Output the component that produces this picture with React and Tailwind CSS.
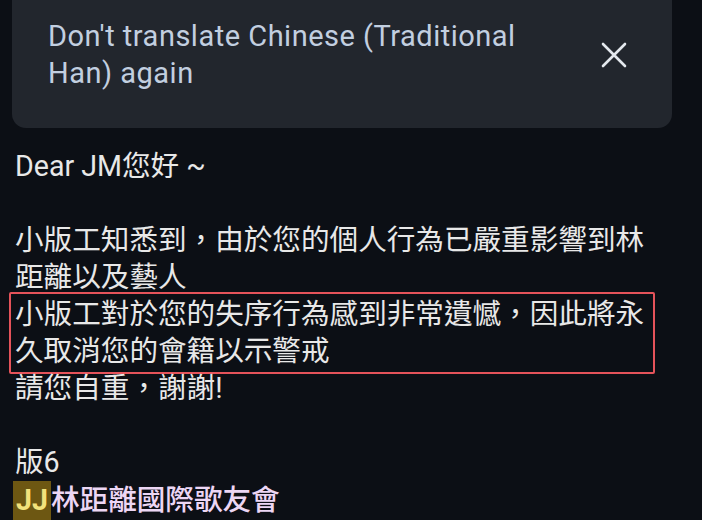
export default function App() {
  const font = { fontFamily: 'Roboto, "Noto Sans CJK TC", sans-serif' }

  return (
    <main className="h-[520px] w-[702px] overflow-hidden bg-[#0c0f15]" style={font}>
      <div className="ml-[12px] mr-[30px] h-[128px] rounded-b-[14px] bg-[#22262d] pl-[36px] pr-[44px] pt-[18px] flex justify-between">
        <p className="text-[29px] leading-[37px] tracking-[0.5px] text-[#c2cfe0]">
          Don't translate Chinese (Traditional
          <br />
          Han) again
        </p>
        <svg width="28" height="28" viewBox="0 0 28 28" className="mt-[23px]" fill="none" stroke="#e4e8ee" strokeWidth="2.6" strokeLinecap="round">
          <path d="M3 3L25 25M25 3L3 25" />
        </svg>
      </div>

      <div className="mt-[20px] pl-[15px] text-[28.6px] leading-[37px] text-[#e8e8e8]">
        <div>Dear JM您好 ~</div>
        <div>&nbsp;</div>
        <div>小版工知悉到，由於您的個人行為已嚴重影響到林</div>
        <div>距離以及藝人</div>
        <div className="-ml-[6px] w-[646px] -my-[4px] py-[2px] pl-[4px] border-2 border-[#e5535a] rounded-[2px]">
          <div>小版工對於您的失序行為感到非常遺憾，因此將永</div>
          <div>久取消您的會籍以示警戒</div>
        </div>
        <div>請您自重，謝謝!</div>
        <div>&nbsp;</div>
        <div>版6</div>
        <div className="flex items-center">
          <span className="-ml-[2px] bg-[#6d5712] px-[3px] py-[1px] font-bold text-[#f2e27c]">JJ</span>
          <span className="font-medium text-[#ecd6f4]">林距離國際歌友會</span>
        </div>
      </div>
    </main>
  )
}
